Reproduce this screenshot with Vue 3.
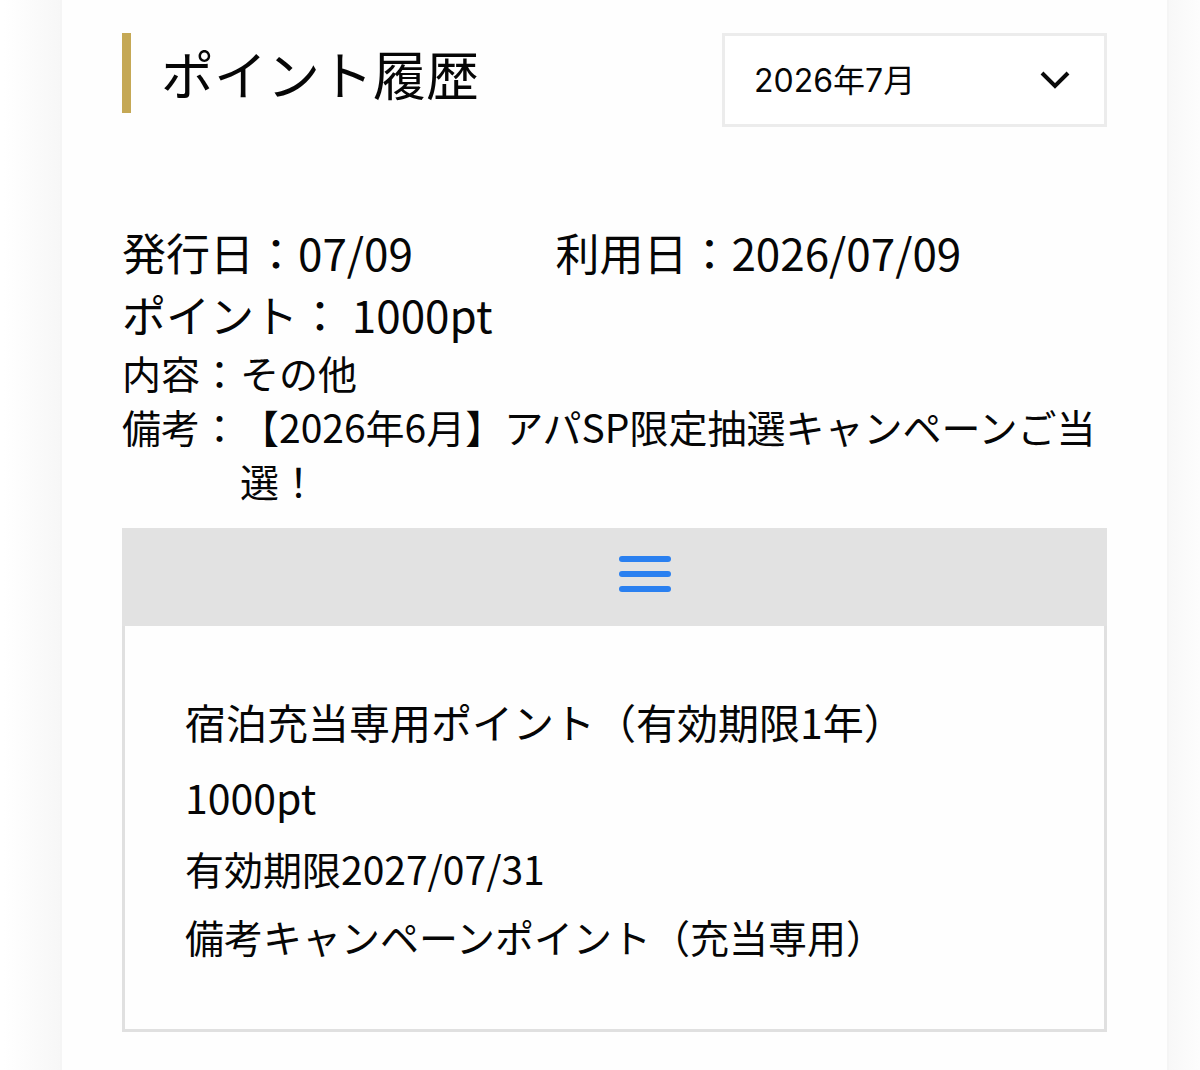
<template>
  <div class="page">
    <main class="card">
      <header class="card-header">
        <h1 class="title">ポイント履歴</h1>
        <div class="month-select">
          <select v-model="selectedMonth" aria-label="表示月">
            <option v-for="month in months" :key="month" :value="month">{{ month }}</option>
          </select>
          <svg class="chevron" width="30" height="18" viewBox="0 0 30 18" fill="none" stroke="#0a0a0a" stroke-width="4" aria-hidden="true">
            <path d="M2 2 L15 15 L28 2"></path>
          </svg>
        </div>
      </header>

      <section class="history">
        <div class="dates">
          <p>発行日：{{ history.issued }}</p>
          <p>利用日：{{ history.used }}</p>
        </div>
        <p class="points">ポイント： {{ history.points }}pt</p>
        <dl class="notes">
          <div v-for="note in history.notes" :key="note.label" class="note">
            <dt>{{ note.label }}：</dt>
            <dd>{{ note.text }}</dd>
          </div>
        </dl>

        <button class="toggle" type="button" aria-label="詳細" :aria-expanded="isOpen" @click="toggleDetail">
          <svg width="52" height="36" viewBox="0 0 52 36" fill="none" stroke="#2a80f0" stroke-width="6" stroke-linecap="round">
            <line x1="3" y1="3" x2="49" y2="3"></line>
            <line x1="3" y1="18" x2="49" y2="18"></line>
            <line x1="3" y1="33" x2="49" y2="33"></line>
          </svg>
        </button>
        <div v-if="isOpen" class="detail">
          <p class="detail-main">宿泊充当専用ポイント（有効期限1年）</p>
          <p class="detail-main">1000pt</p>
          <p>有効期限2027/07/31</p>
          <p>備考キャンペーンポイント（充当専用）</p>
        </div>
      </section>
    </main>
  </div>
</template>

<script setup>
import { ref } from 'vue';

const months = ['2026年7月', '2026年6月', '2026年5月'];
const selectedMonth = ref(months[0]);

const history = {
  issued: '07/09',
  used: '2026/07/09',
  points: 1000,
  notes: [
    { label: '内容', text: 'その他' },
    { label: '備考', text: '【2026年6月】アパSP限定抽選キャンペーンご当選！' },
  ],
};

// 詳細の開閉
const isOpen = ref(true);
const toggleDetail = () => {
  isOpen.value = !isOpen.value;
};
</script>

<style>
body {
  margin: 0;
  background: #fff;
}
</style>

<style scoped>
.page {
  box-sizing: border-box;
  min-height: 100vh;
  padding: 0 31px 0 60px;
  display: flex;
  /* カード左右の影 */
  background:
    linear-gradient(to left, #fdfdfd, #f8f8f8) right / 31px 100% no-repeat,
    linear-gradient(to right, #fff 4px, #f7f7f7) left / 60px 100% no-repeat;
  color: #060606;
  font-family: "Noto Sans CJK JP", sans-serif;
}

.card {
  flex: 1;
  min-width: 0;
  padding: 33px 60px 38px;
  border: solid #f5f5f5;
  border-width: 0 2px;
  background: #fefefe;
}

p,
dl,
dd {
  margin: 0;
}

.card-header {
  display: flex;
  justify-content: space-between;
  align-items: flex-start;
}

.title {
  margin: 0;
  padding-left: 30px;
  border-left: 9px solid #c5a855;
  font-size: 53px;
  font-weight: 400;
  line-height: 80px;
}

.month-select {
  position: relative;
  width: 385px;
}

.month-select select {
  display: block;
  box-sizing: border-box;
  width: 100%;
  height: 94px;
  padding: 0 80px 0 29px;
  border: 3px solid #ececec;
  border-radius: 0;
  appearance: none;
  background: #fff;
  color: inherit;
  font-family: Inter, "Noto Sans CJK JP", sans-serif;
  font-size: 32px;
}

.chevron {
  position: absolute;
  top: 38px;
  right: 37px;
  pointer-events: none;
}

.history {
  margin-top: 94px;
}

.dates {
  display: grid;
  grid-template-columns: 44% 1fr;
}

.dates,
.points {
  font-size: 44px;
  line-height: 62px;
}

.notes,
.detail {
  font-size: 39px;
}

.notes {
  line-height: 54px;
}

.note {
  display: flex;
}

.note dt {
  flex: 0 0 118px;
}

.toggle {
  display: flex;
  justify-content: center;
  width: 100%;
  margin-top: 21px;
  padding: 28px 0 34px 60px;
  border: none;
  background: #e2e2e2;
  cursor: pointer;
}

.detail {
  padding: 58px 60px 59px;
  border: 3px solid #e0e0e0;
  border-top: none;
  line-height: 68px;
}

.detail-main {
  font-size: 41px;
  line-height: 75px;
}
</style>
